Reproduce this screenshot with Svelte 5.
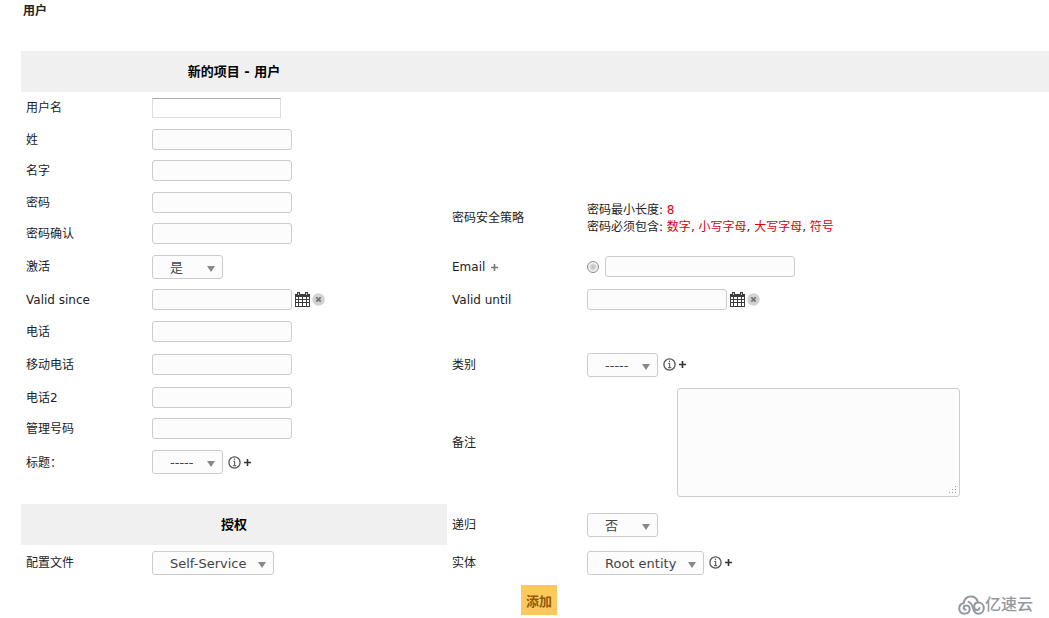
<script>
	let active = $state('是');
	let recursive = $state('否');
</script>

{#snippet picker(id, options)}
	<span class="picker">
		<select {id}>
			{#each options as option}
				<option>{option}</option>
			{/each}
		</select>
	</span>
{/snippet}

{#snippet textRow(id, label, type = 'text')}
	<label class="left-label" for={id}>{label}</label>
	<div class="left-field"><input {id} {type} /></div>
{/snippet}

{#snippet plus()}
	<svg width="9" height="9" viewBox="0 0 9 9" aria-hidden="true">
		<path d="M4.5 1v7M1 4.5h7" stroke="currentColor" stroke-width="1.6" />
	</svg>
{/snippet}

<!-- info and add buttons next to a dropdown -->
{#snippet tools()}
	<button type="button" class="icon info" aria-label="info">
		<svg width="13" height="13" viewBox="0 0 13 13">
			<circle cx="6.5" cy="6.5" r="5.6" fill="#fff" stroke="#555" stroke-width="1.3" />
			<path d="M6.5 2.6v1.6M5.2 5.5h1.4v4M5 9.6h3.2" fill="none" stroke="#666" stroke-width="1.2" />
		</svg>
	</button>
	<button type="button" class="icon" aria-label="add">{@render plus()}</button>
{/snippet}

<!-- calendar and clear buttons next to a date -->
{#snippet dateTools()}
	<button type="button" class="icon" aria-label="calendar">
		<svg width="15" height="15" viewBox="0 0 15 15">
			<path d="M0 2h15v13H0z" fill="#3c3c3c" />
			<path d="M2 0h3v4H2zM10 0h3v4h-3z" fill="#3c3c3c" />
			<path d="M3 1h1v2H3zM11 1h1v2h-1z" fill="#ccc" />
			<path
				d="M1 5h2v2H1zM4 5h3v2H4zM8 5h3v2H8zM12 5h2v2h-2zM1 8h2v2H1zM4 8h3v2H4zM8 8h3v2H8zM12 8h2v2h-2zM1 11h2v3H1zM4 11h3v3H4zM8 11h3v3H8zM12 11h2v3h-2z"
				fill="#fff"
			/>
		</svg>
	</button>
	<button type="button" class="icon" aria-label="clear">
		<svg width="13" height="13" viewBox="0 0 13 13">
			<circle cx="6.5" cy="6.5" r="6.2" fill="#d2d2d2" />
			<path d="M4.3 4.3l4.4 4.4M8.7 4.3L4.3 8.7" stroke="#777" stroke-width="1.9" />
		</svg>
	</button>
{/snippet}

<main>
	<h1>用户</h1>

	<form onsubmit={(e) => e.preventDefault()}>
		<div class="grid">
			<h2>新的项目 - 用户</h2>
			<div class="head-rest"></div>

			<label class="left-label" for="name">用户名</label>
			<div class="left-field"><input id="name" class="plain" type="text" /></div>

			{@render textRow('realname', '姓')}
			{@render textRow('firstname', '名字')}
			{@render textRow('password', '密码', 'password')}

			<div class="right-label two-rows">密码安全策略</div>
			<div class="right-field two-rows">
				<p>
					密码最小长度: <em>8</em><br />
					密码必须包含: <em>数字</em>, <em>小写字母</em>, <em>大写字母</em>, <em>符号</em>
				</p>
			</div>

			{@render textRow('password2', '密码确认', 'password')}

			<label class="left-label" for="active">激活</label>
			<div class="left-field">
				<span class="picker">
					<select id="active" bind:value={active}>
						<option>是</option>
						<option>否</option>
					</select>
				</span>
			</div>
			<div class="right-label">
				<label for="email">Email</label>
				<button type="button" class="icon faded" aria-label="add email">{@render plus()}</button>
			</div>
			<div class="right-field">
				<input type="radio" name="default_email" aria-label="default email" />
				<input id="email" class="wide" type="text" />
			</div>

			<label class="left-label" for="since">Valid since</label>
			<div class="left-field"><input id="since" type="text" />{@render dateTools()}</div>
			<label class="right-label" for="until">Valid until</label>
			<div class="right-field"><input id="until" type="text" />{@render dateTools()}</div>

			{@render textRow('phone', '电话')}

			{@render textRow('mobile', '移动电话')}
			<label class="right-label" for="category">类别</label>
			<div class="right-field">{@render picker('category', ['-----'])}{@render tools()}</div>

			{@render textRow('phone2', '电话2')}
			<label class="right-label four-rows" for="comment">备注</label>
			<div class="right-field four-rows comment"><textarea id="comment"></textarea></div>

			{@render textRow('number', '管理号码')}

			<label class="left-label" for="title">标题：</label>
			<div class="left-field">{@render picker('title', ['-----'])}{@render tools()}</div>

			<div class="spacer"></div>

			<h2>授权</h2>
			<label class="right-label" for="recursive">递归</label>
			<div class="right-field">
				<span class="picker">
					<select id="recursive" bind:value={recursive}>
						<option>否</option>
						<option>是</option>
					</select>
				</span>
			</div>

			<label class="left-label" for="profile">配置文件</label>
			<div class="left-field">{@render picker('profile', ['Self-Service'])}</div>
			<label class="right-label" for="entity">实体</label>
			<div class="right-field">{@render picker('entity', ['Root entity'])}{@render tools()}</div>
		</div>

		<footer>
			<button type="submit" class="submit">添加</button>
			<div class="brand">
				<svg
					width="27"
					height="20"
					viewBox="0 0 27 20"
					fill="none"
					stroke="#9299a1"
					stroke-width="2"
					stroke-linecap="round"
				>
					<!-- cloud top -->
					<path d="M5.6 8C6.4 4 9.2 1.4 12.8 1.4c3.4 0 6 2 6.9 5" />
					<!-- left curl -->
					<path
						d="M5.6 8C2.9 8.7 1.2 10.8 1.2 13.6c0 2.9 2.2 5.1 5.2 5.1 3.3 0 5.3-2 5.3-4.6 0-2.2-1.5-3.7-3.4-3.7-1.6 0-2.6 1-2.6 2.3 0 1.1.8 1.9 1.9 1.9"
					/>
					<!-- right curl -->
					<path
						d="M10.6 6.9c2.9 1 3.7 3.6 4.5 6.3.8 3 2.4 5.5 5.2 5.5 3.1 0 5.5-2.3 5.5-5.5 0-3.3-2.4-5.6-5.4-5.6-2.6 0-4.2 1.8-4.2 4.1 0 2 1.2 3.2 2.8 3.2 1.4 0 2.3-.8 2.3-2"
					/>
				</svg>
				<span>亿速云</span>
			</div>
		</footer>
	</form>
</main>

<style>
	:global(body) {
		background: #fff;
	}

	main {
		padding-left: 21px;
		font-family: 'DejaVu Sans', 'Noto Sans CJK SC', sans-serif;
		font-size: 12px;
		line-height: 17px;
		color: #222;
	}

	h1 {
		margin: 0;
		padding: 3px 2px 31px;
		font-size: 12px;
		line-height: 17px;
	}

	.grid {
		display: grid;
		grid-template-columns: 126fr 300fr 135fr 467fr;
		grid-template-rows: 41px 31px 32px 31px 32px 31px 35px 31px 33px 33px 32px 31px 36px 24px 41px 35px;
	}

	h2 {
		grid-column: 1 / 3;
		display: flex;
		align-items: center;
		justify-content: center;
		margin: 0;
		background: #f0f0f0;
		color: #000;
		font-size: 13px;
	}
	.head-rest {
		grid-column: 3 / 5;
		background: #f0f0f0;
	}

	.left-label,
	.left-field,
	.right-label,
	.right-field {
		display: flex;
		align-items: center;
		padding-left: 5px;
	}
	.left-label,
	.right-label,
	p {
		padding-top: 2px;
	}
	.left-label,
	.spacer {
		grid-column: 1;
	}
	.left-field {
		grid-column: 2;
	}
	.right-label {
		grid-column: 3;
	}
	.right-field {
		grid-column: 4;
	}
	.two-rows {
		grid-row: span 2;
	}
	.four-rows {
		grid-row: span 4;
	}
	.comment {
		justify-content: center;
	}

	p {
		margin: 0;
	}
	em {
		font-style: normal;
		color: #d9000f;
	}

	input:not([type='radio']),
	textarea,
	select {
		box-sizing: border-box;
		border: 1px solid #ccc;
		border-radius: 3px;
		background: #fcfcfc;
		font-family: inherit;
		color: #444;
	}
	input:not([type='radio']) {
		width: 140px;
		height: 21px;
		padding: 0 4px;
	}
	input.plain {
		width: 129px;
		height: 20px;
		border-color: #aaa #ddd #ddd;
		border-radius: 0;
		background: #fff;
	}
	input.wide {
		width: 190px;
	}
	textarea {
		width: 283px;
		height: 109px;
	}
	/* dotted grip */
	textarea::-webkit-resizer {
		background:
			linear-gradient(#999, #999) 11px 5px / 1px 1px no-repeat,
			linear-gradient(#999, #999) 8px 8px / 1px 1px no-repeat,
			linear-gradient(#999, #999) 11px 8px / 1px 1px no-repeat,
			linear-gradient(#999, #999) 5px 11px / 1px 1px no-repeat,
			linear-gradient(#999, #999) 8px 11px / 1px 1px no-repeat,
			linear-gradient(#999, #999) 11px 11px / 1px 1px no-repeat;
	}

	input[type='radio'] {
		appearance: none;
		box-sizing: border-box;
		width: 12px;
		height: 12px;
		margin: 0 6px 0 0;
		border: 1px solid #8a8a8a;
		border-radius: 50%;
		background: radial-gradient(#bbb, #ddd 45%, #f6f6f6 60%);
	}

	.picker {
		position: relative;
		display: inline-flex;
	}
	.picker::after {
		content: '';
		position: absolute;
		right: 8px;
		top: 11px;
		border: 4px solid transparent;
		border-top: 6px solid #888;
		border-bottom: 0;
		pointer-events: none;
	}
	select {
		appearance: none;
		min-width: 71px;
		height: 24px;
		padding: 1px 26px 0 17px;
		font-size: 13px;
	}

	.icon {
		display: flex;
		margin-left: 3px;
		padding: 0;
		border: 0;
		background: none;
		color: #333;
	}
	.icon + .icon {
		margin-left: 2px;
	}
	.icon.info {
		margin-left: 5px;
	}
	.icon.faded {
		margin-left: 5px;
		color: #777;
	}

	footer {
		display: grid;
		grid-template-columns: 1fr auto 1fr;
		padding: 5px 0 3px 8px;
	}
	.submit {
		grid-column: 2;
		height: 30px;
		padding: 0 5px;
		border: 0;
		background: #fec95c;
		color: #8f5a0a;
		font: bold 13px 'DejaVu Sans', 'Noto Sans CJK SC', sans-serif;
	}
	.brand {
		display: flex;
		align-items: flex-end;
		justify-content: flex-end;
		padding-right: 16px;
		color: #9299a1;
		font-size: 16px;
		font-weight: 500;
		line-height: 20px;
	}
</style>
